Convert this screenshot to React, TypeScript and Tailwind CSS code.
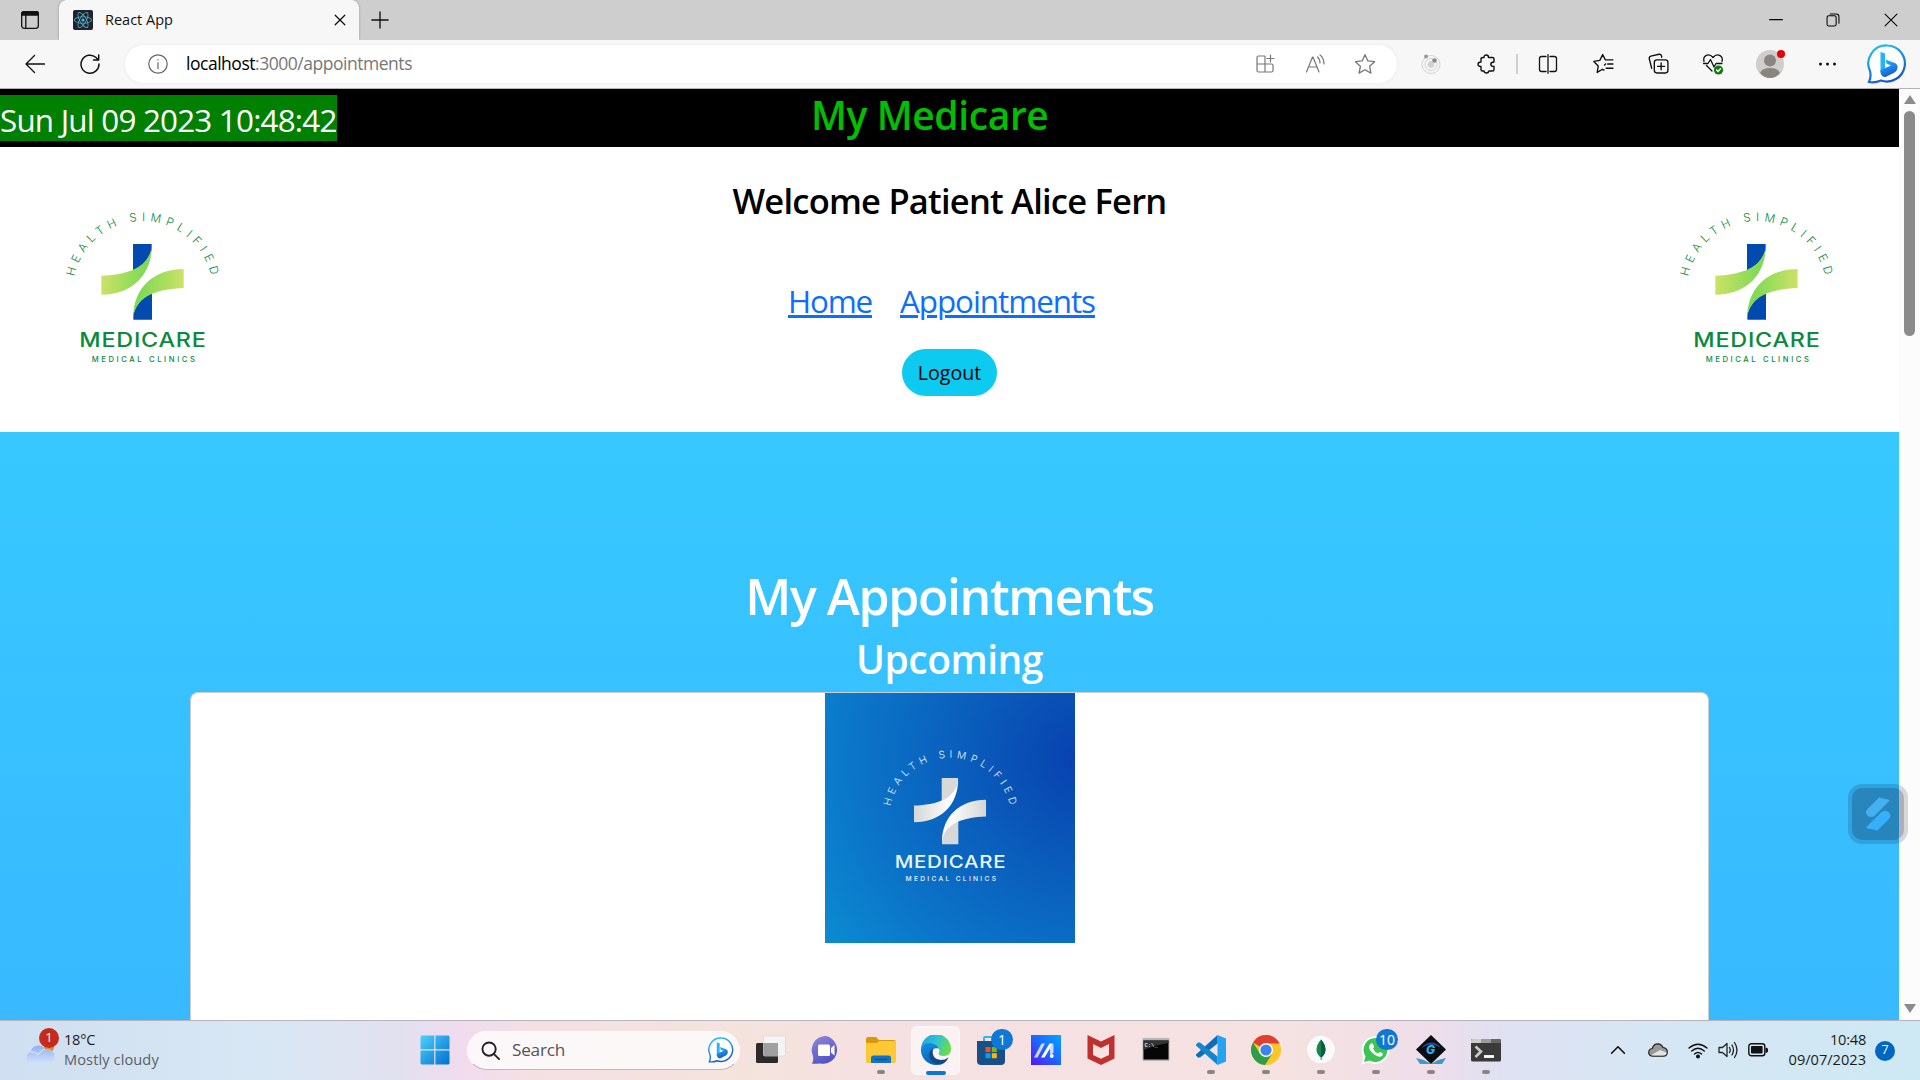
import type { ReactNode } from "react";
import { FaReact } from "react-icons/fa6";

function Line({ children, className, sw = 1.3 }: { children: ReactNode; className: string; sw?: number }) {
  return (
    <svg viewBox="0 0 20 20" className={className} fill="none" stroke="currentColor" strokeWidth={sw} strokeLinecap="round" strokeLinejoin="round">
      {children}
    </svg>
  );
}

function LogoMark({ mono = false, id }: { mono?: boolean; id: string }) {
  const text = mono ? "#eaf5ff" : "#0b8a3e";
  const bar = mono ? "#d8d8d8" : "#034ab0";
  const outer = mono ? "#d6d6d6" : "#cbe266";
  const inner = mono ? "#ffffff" : "#82d955";
  return (
    <>
      <defs>
        <linearGradient id={id + "g"} x1="0" x2="1">
          <stop offset="0" stopColor={outer} />
          <stop offset="0.85" stopColor={inner} />
        </linearGradient>
        <path id={id + "arc"} d="M102.6 259.3A210 210 0 0 1 513.4 259.3" />
      </defs>
      {[0, 180].map((r) => (
        <g key={r} transform={`rotate(${r} 307.5 275.5)`}>
          <path d="M279 162H335V180Q320 225 279 242Z" fill={bar} />
          <path d="M184 257C262 254 325 235 335 170C335 255 275 314 184 314Z" fill={`url(#${id}g)`} />
        </g>
      ))}
      <text fill={text} fontFamily="Inter, sans-serif" fontSize="35" fontWeight="300">
        <textPath href={`#${id}arc`} textLength="568">HEALTH SIMPLIFIED</textPath>
      </text>
      <text x="118" y="472" fill={text} fontFamily="Inter, sans-serif" fontWeight="500" fontSize="59" letterSpacing="2" textLength="382" lengthAdjust="spacingAndGlyphs">MEDICARE</text>
      <text x="155" y="516" fill={text} fontFamily="Inter, sans-serif" fontWeight="500" fontSize="23" textLength="310">MEDICAL CLINICS</text>
    </>
  );
}

function BingBubble({ className, id }: { className: string; id: string }) {
  return (
    <svg viewBox="0 0 40 40" className={className}>
      <defs>
        <linearGradient id={id} x1="0.2" y1="0" x2="0.6" y2="1">
          <stop offset="0" stopColor="#20c3f5" />
          <stop offset="1" stopColor="#1b4fd0" />
        </linearGradient>
      </defs>
      <path d="M20.5 1.5A18 18 0 1 1 14 36.5Q8 39 2 38Q4.500 33 3 27A18 18 0 0 1 20.500 1.500Z" fill="#fff" stroke={`url(#${id})`} strokeWidth="2.200" />
      <path d="M13.500 8L18 9.500V25L13.500 28Z" fill="#26b5f2" />
      <path d="M13.500 26L18 24L24 21.500L19.500 19.500L18.500 15.500L28 19Q31 20.500 30.500 24Q30 27 27.500 28.500L18.500 33Q15 33.500 13.500 29Z" fill={`url(#${id})`} />
    </svg>
  );
}

function TabStrip() {
  return (
    <div className="flex h-10 items-center bg-[#cecece]">
      <div className="flex h-10 w-[59px] items-center pl-5">
        <svg viewBox="0 0 20 20" className="size-5" fill="none" stroke="#111" strokeWidth="1.300">
          <rect x="1.700" y="1.700" width="16.600" height="16.600" rx="2.500" />
          <path d="M1.700 5V3.500Q1.700 1.700 3.700 1.700H16.300Q18.300 1.700 18.300 3.500V5Z" fill="#111" />
          <path d="M5.800 5V18" />
        </svg>
      </div>
      <div className="flex h-10 w-[300px] items-center rounded-t-lg bg-[#f7f7f7] pl-[14px] shadow-[0_0_3px_rgba(0,0,0,0.25)]">
        <div className="flex size-5 items-center justify-center rounded-[2px] bg-[#20232a]">
          <FaReact className="size-[18px] text-[#53b5d2]" />
        </div>
        <span className="ml-3 w-[229px] text-[14.5px] whitespace-nowrap text-[#111]">React App</span>
        <Line className="-ml-[2px] size-4 text-[#111]" sw={1.600}><path d="M4 4L16 16M16 4L4 16" /></Line>
      </div>
      <Line className="ml-3 size-[18px] text-[#111]" sw={1.500}><path d="M10 1V19M1 10H19" /></Line>
      <div className="flex-1" />
      <Line className="mr-[43px] size-[14px] text-black" sw={1.600}><path d="M1 9.500H19" /></Line>
      <Line className="mr-[44px] size-[14px] text-black" sw={1.500}><rect x="1.500" y="4" width="13" height="14.500" rx="2.500" /><path d="M6 1.500H14.500Q18.500 1.500 18.500 5.500V14.500" /></Line>
      <Line className="mr-[22px] size-[14px] text-black" sw={1.500}><path d="M1.500 1.500L18.500 18.500M18.500 1.500L1.500 18.500" /></Line>
    </div>
  );
}

function Toolbar() {
  return (
    <div className="flex h-[49px] items-center border-b border-[#b3b3b3] bg-[#f7f7f7] pb-px">
      <Line className="ml-[25px] size-5 text-[#111]"><path d="M19.500 10H1M9.500 1.500L1 10L9.500 18.500" /></Line>
      <Line className="ml-[35px] size-5 text-[#111]" sw={1.500}><path d="M19 10A9 9 0 1 1 16 3.500L18.500 6M18.700 1V6H13.500" /></Line>
      <div className="ml-[25px] flex h-[38px] w-[1272px] items-center rounded-full bg-white shadow-[0_0_4px_rgba(0,0,0,0.06)]">
        <Line className="ml-[23px] size-5 text-[#666]" sw={1.200}><circle cx="10" cy="10" r="9.200" /><path d="M10 8.700V14.500M10 5.700V6" /></Line>
        <span className="ml-[18px] w-[1068px] text-[17.5px] tracking-[-0.472px] whitespace-nowrap text-[#777]"><span className="text-black">localhost</span>:3000/appointments</span>
        <Line className="ml-px size-5 text-[#777]" sw={1.200}><path d="M10 10V2H3.500Q2 2 2 3.500V16.500Q2 18 3.500 18H16.500Q18 18 18 16.500V11.500Q18 10 16.500 10H2M10 10V18M15.500 1V8M12 4.500H19" /></Line>
        <Line className="ml-[30px] size-5 text-[#777]" sw={1.200}><path d="M1.500 18L7.500 3H8L14 18M3.500 13H12M12.500 3Q15 5 15 9M15 1Q19 4 19 10" /></Line>
        <Line className="ml-[29px] size-[22px] text-[#777]" sw={1.200}><path d="M10 1.500L12.600 7.200L18.700 7.900L14.200 12.100L15.400 18.300L10 15.200L4.600 18.300L5.800 12.100L1.300 7.900L7.400 7.200Z" /></Line>
      </div>
      <svg viewBox="0 0 20 20" className="ml-6 size-5" fill="none" stroke="#d2d2d2">
        <circle cx="10" cy="10.500" r="9" /><circle cx="10" cy="10.500" r="6" /><circle cx="10" cy="10.500" r="3" fill="#d2d2d2" />
        <circle cx="5" cy="2.500" r="2" fill="#999" stroke="none" /><circle cx="13.500" cy="6.500" r="2.200" fill="#888" stroke="none" />
      </svg>
      <Line className="ml-[35px] size-5 text-[#111]" sw={1.400}><path d="M7 3.500H8Q8 1 10.300 1Q12.500 1 12.500 3.500H16.500Q18 3.500 18 5V8Q14.800 8 14.800 10.300Q14.800 12.500 18 12.500V15.500Q18 17 16.500 17H13Q12.500 19 10.500 19Q8.300 19 8 17H6.500Q5 17 5 15.500V12.500Q2 12.500 2 10.200Q2 8 5 8V5Q5 3.500 7 3.500Z" /></Line>
      <div className="ml-5 h-5 w-0.5 bg-[#cfcfcf]" />
      <Line className="ml-5 size-5 text-[#111]" sw={1.300}><path d="M8 2.500H3.500Q1.500 2.500 1.500 4.500V15.500Q1.500 17.500 3.500 17.500H8M12 2.500H16.500Q18.500 2.500 18.500 4.500V15.500Q18.500 17.500 16.500 17.500H12M10 .7V19.300" /></Line>
      <Line className="ml-[35px] size-[21px] text-[#111]"><path d="M12.500 6.500H19M14 10.500H19M12.500 14.500H19M9 15.500L4 18.500L5 12.300L.8 8L6.500 7L9.200 1.500L11.800 6.500M9 15.500L10.500 16.300M11 11.500L12 10.500" /></Line>
      <Line className="ml-[34px] size-[21px] text-[#111]"><rect x="6" y="6.500" width="13" height="12.500" rx="2.500" /><path d="M12.500 9.500V16M9.200 12.700H15.800M3.500 14.500L1.200 5.500Q.9 3.500 2.700 3L10.500 1.200Q12.500 1 13 3V4" /></Line>
      <svg viewBox="0 0 22 22" className="ml-[33px] size-[22px]" fill="none" stroke="#111" strokeWidth="1.300" strokeLinecap="round" strokeLinejoin="round">
        <path d="M2 8.500Q.8 4 4.300 2.300Q8 .8 11 4.500Q14 .8 17.700 2.300Q21.200 4 20 8.500M4.500 12.500L10 18M1.500 10.500H6L8.500 6.500L12 14L14 10.500H20" />
        <circle cx="16.500" cy="17" r="4.600" fill="#107c10" stroke="none" /><path d="M14.500 17L16 18.500L18.500 15.800" stroke="#fff" />
      </svg>
      <div className="relative ml-[32px] size-7">
        <svg viewBox="0 0 28 28" className="size-7"><circle cx="14" cy="14" r="14" fill="#d0cecc" /><circle cx="14" cy="10.500" r="6" fill="#8a8581" /><path d="M4 23Q6 18 14 18Q22 18 24 23Q20 28 14 28Q8 28 4 23Z" fill="#8a8581" /></svg>
        <span className="absolute top-0 -right-px size-2 rounded-full bg-[#e60000]" />
      </div>
      <svg viewBox="0 0 20 20" className="ml-[34px] size-5" fill="#111"><circle cx="2.500" cy="10" r="1.500" /><circle cx="9.500" cy="10" r="1.500" /><circle cx="16.500" cy="10" r="1.500" /></svg>
      <BingBubble id="bingTop" className="ml-[29px] size-10" />
    </div>
  );
}

function SiteHeader() {
  return (
    <header>
      <div className="flex h-[58px] items-start bg-black">
        <span className="mt-1.5 h-[46px] w-[337px] bg-[#008000] text-[31.4px] leading-[49px] tracking-[-0.8px] whitespace-nowrap text-white">Sun Jul 09 2023 10:48:42</span>
        <h1 className="ml-[474px] text-[39px] leading-[52px] font-semibold tracking-[-0.4px] whitespace-nowrap text-[#00bf00]">My Medicare</h1>
      </div>
      <div className="flex h-[285px] bg-white">
        <svg viewBox="0 0 600 570" className="mt-[43px] ml-10 h-[190px] w-[200px]"><LogoMark id="left" /></svg>
        <div className="flex flex-1 flex-col items-center pt-8 pl-[5px]">
          <h2 className="text-[34.5px] leading-[44px] font-semibold tracking-[-0.77px] whitespace-nowrap text-black">Welcome Patient Alice Fern</h2>
          <nav className="mt-14 mr-4 flex gap-7 text-[31.4px] leading-[44px] text-[#0d6efd]">
            <a className="tracking-[-1.18px] whitespace-nowrap underline decoration-[3px] underline-offset-2">Home</a>
            <a className="tracking-[-1.05px] whitespace-nowrap underline decoration-[3px] underline-offset-2">Appointments</a>
          </nav>
          <button className="mt-[26px] flex h-[47px] w-[95px] items-center justify-center rounded-full bg-[#0dcaf0] text-[19.6px] text-black">Logout</button>
        </div>
        <svg viewBox="0 0 600 570" className="mt-[43px] mr-[45px] h-[190px] w-[200px]"><LogoMark id="right" /></svg>
      </div>
    </header>
  );
}

function Appointments() {
  return (
    <main className="flex flex-1 flex-col items-center overflow-hidden bg-linear-to-b from-[#36c8ff] to-[#39b9ff] pt-[134px] text-white">
      <h1 className="text-[50px] leading-[60px] font-semibold tracking-[-1.4px] whitespace-nowrap">My Appointments</h1>
      <h2 className="mt-1.5 text-[39px] leading-[54px] font-semibold tracking-[-0.5px] whitespace-nowrap">Upcoming</h2>
      <div className="mt-1.5 flex w-[1519px] flex-1 justify-center rounded-t-lg border border-b-0 border-[#c9cdd0] bg-white">
        <div className="size-[250px] bg-[radial-gradient(circle_at_102%_26%,#0841ae_0%,#0a5ebc_38%,#0b74c8_70%,#0c96d5_115%)]">
          <svg viewBox="0 0 750 750" className="size-[250px]">
            <g transform="translate(106 113) scale(0.875)"><LogoMark mono id="card" /></g>
          </svg>
        </div>
      </div>
    </main>
  );
}

function ScrollBar() {
  return (
    <div className="flex w-[21px] flex-col items-center bg-[#fcfcfc] py-1.5">
      <svg viewBox="0 0 12 9" className="h-[9px] w-3"><path d="M6 0L12 9H0Z" fill="#8b8b8b" /></svg>
      <div className="mt-[7px] h-[225px] w-[11px] rounded-full bg-[#8b8b8b]" />
      <div className="flex-1" />
      <svg viewBox="0 0 12 9" className="mb-px h-[9px] w-3"><path d="M6 9L12 0H0Z" fill="#8b8b8b" /></svg>
    </div>
  );
}

function TaskItem({ children, running, active, badge }: { children: ReactNode; running?: boolean; active?: boolean; badge?: string }) {
  return (
    <div className="relative flex h-[59px] w-[55px] items-center justify-center pb-px">
      {active && <div className="absolute inset-x-[3px] inset-y-[5px] rounded-md border border-white/50 bg-white/60" />}
      <svg viewBox="0 0 30 30" className="relative size-[30px]">{children}</svg>
      {running && <div className="absolute bottom-1.5 left-6 h-1 w-2 rounded-full bg-[#8d8485]" />}
      {active && <div className="absolute bottom-[5px] left-[18px] h-1 w-5 rounded-full bg-[#0a78d4]" />}
      {badge && <div className="absolute top-2 right-[5px] flex h-[21px] w-[22px] items-center justify-center rounded-full bg-[#0f78d4] text-[14px] text-white">{badge}</div>}
    </div>
  );
}

function Taskbar() {
  return (
    <footer className="flex h-[60px] items-center border-t border-[#b5b3bb] bg-[linear-gradient(90deg,#d0dff1_0px,#d8e7f4_260px,#e2e1f0_400px,#f0dcee_460px,#f4e0e4_530px,#f4e3dd_745px,#f5e1e1_850px,#f5e2e1_1280px,#efdeea_1430px,#dfe1f2_1500px,#d7e6f4_1640px,#cde9f3_1920px)]">
      <div className="relative ml-[25px] h-[59px] w-[39px]">
        <svg viewBox="0 0 30 20" className="mt-[23px] h-5 w-[30px]">
          <defs><linearGradient id="cl" x1="0" y1="0" x2="0" y2="1"><stop offset="0" stopColor="#8fb2ee" /><stop offset="1" stopColor="#d3e1fa" /></linearGradient></defs>
          <circle cx="24" cy="3" r="5" fill="#f5821f" />
          <path d="M6 19.500A6 6 0 0 1 5.500 8A8 8 0 0 1 20 5A7.300 7.300 0 0 1 24 19.500Z" fill="url(#cl)" />
          <path d="M5.500 8Q10 7 13 11Q16 5.500 20 5" stroke="#e3edfd" fill="none" />
        </svg>
        <span className="absolute top-[7px] left-3.5 flex size-5 items-center justify-center rounded-full bg-[#c42b1c] text-[13px] text-white">1</span>
      </div>
      <div className="mb-[3px] flex w-[356px] flex-col text-[14.6px] leading-5 whitespace-nowrap">
        <span className="tracking-[-0.25px] text-[#1b1b1b]">18°C</span>
        <span className="tracking-[0.1px] text-[#5a5f66]">Mostly cloudy</span>
      </div>
      <svg viewBox="0 0 30 30" className="mb-px size-[30px]">
        <defs><linearGradient id="win" x1="0" y1="0" x2="1" y2="1"><stop offset="0" stopColor="#4fd0fb" /><stop offset="1" stopColor="#0070d2" /></linearGradient></defs>
        <path d="M1.500 .5H14.200V14.200H.5V1.500ZM15.400 .5H28.500L29.500 1.500V14.200H15.400ZM.5 15.400H14.200V29.500H1.500L.5 28.500ZM15.400 15.400H29.500V28.500L28.500 29.500H15.400Z" fill="url(#win)" />
      </svg>
      <div className="mb-px ml-[17px] flex h-[39px] w-[273px] items-center rounded-full border border-white/60 border-b-[#c3b7bb] bg-white/75 pl-[13px]">
        <Line className="size-[19px] text-[#222]" sw={2}><circle cx="8.500" cy="8.500" r="7" /><path d="M13.500 13.500L19 19" /></Line>
        <span className="ml-3 w-[196px] text-[17.2px] tracking-[-0.24px] text-[#555]">Search</span>
        <BingBubble id="bingTask" className="size-[26px]" />
      </div>
      <div className="ml-[3px] flex">
        <TaskItem><rect x="0" y="8" width="22" height="20" rx="1.500" fill="#2b2b2b" /><rect x="7.500" y="1" width="22" height="20" rx="1.500" fill="#f4f4f4" stroke="#d8d8d8" strokeWidth=".7" /><path d="M7.500 8H22V21H7.500Z" fill="#a0a0a0" /></TaskItem>
        <TaskItem>
          <defs><linearGradient id="chat" x1="0" y1="0" x2=".5" y2="1"><stop offset="0" stopColor="#9089d8" /><stop offset="1" stopColor="#5452c6" /></linearGradient></defs>
          <path d="M15 1A14 14 0 1 1 9 28.500Q4 29 1 28.800Q2.800 25 2 21A14 14 0 0 1 15 1Z" fill="url(#chat)" /><rect x="7" y="9.500" width="12" height="11.500" rx="1.500" fill="#fff" /><path d="M20 13L23.500 10V20.500L20 17.500Z" fill="#fff" />
        </TaskItem>
        <TaskItem running><path d="M0 4Q0 2 2 2H10L13 5H28Q30 5 30 7V12H0Z" fill="#d9970c" /><path d="M0 8H11L13 6H30V26.500Q30 28 28 28H2Q0 28 0 26.500Z" fill="#fcc935" /><path d="M5 28V23Q5 20.500 7.500 20.500H22.500Q25 20.500 25 23V28Z" fill="#1173c4" /><path d="M9 24.500H21" stroke="#0a4f91" strokeWidth="1.300" /></TaskItem>
        <TaskItem active>
          <defs>
            <linearGradient id="e1" x1="0" y1="0" x2="1" y2=".3"><stop offset="0" stopColor="#1e9fe0" /><stop offset=".55" stopColor="#2dc3d8" /><stop offset="1" stopColor="#63dd55" /></linearGradient>
            <linearGradient id="e2" x1="0" y1="0" x2=".3" y2="1"><stop offset="0" stopColor="#1691e2" /><stop offset="1" stopColor="#0b63bd" /></linearGradient>
          </defs>
          <path d="M0 14A15 15 0 0 1 30 14Q30 21 22.500 21Q18 21 17.500 18.500Q20 15 16 11Q9 5 0 14Z" fill="url(#e1)" />
          <path d="M0 14Q2 7.500 9 8Q16 8.500 18 13.500Q11 12 11 18Q11.500 27 21 29Q18 30 15 30A15 15 0 0 1 0 14Z" fill="url(#e2)" />
          <path d="M12 13.500Q10 24 20 25Q24 25 27.500 22.500Q25 28 20 29.500Q9 29.500 8 20Q8.500 15 12 13.500Z" fill="#114a8b" />
        </TaskItem>
        <TaskItem badge="1"><path d="M8 8V3Q8 2 9 2H21V7" stroke="#35b5e8" strokeWidth="2" fill="none" /><path d="M1 6H29V26Q29 30 25 30H5Q1 30 1 26Z" fill="#174f86" /><path d="M9.500 12H14.500V17H9.500Z" fill="#f25022" /><path d="M15.800 12H20.800V17H15.800Z" fill="#7fba00" /><path d="M9.500 18.200H14.500V23.200H9.500Z" fill="#00a4ef" /><path d="M15.800 18.200H20.800V23.200H15.800Z" fill="#ffb900" /></TaskItem>
        <TaskItem>
          <defs><linearGradient id="asus" x1="1" y1="0" x2="0" y2="1"><stop offset="0" stopColor="#04a6ff" /><stop offset=".5" stopColor="#1d66ff" /><stop offset="1" stopColor="#5a13f5" /></linearGradient></defs>
          <path d="M0 0H30V30H0Z" fill="url(#asus)" /><path d="M3 22.500L10.500 8.500H14L6.500 22.500Z" fill="#c9d9ff" /><path d="M10 22.500L18.500 8.500H22L13.500 22.500Z" fill="#fff" /><path d="M19 12L22.500 8.500V18L19 19.500Z" fill="#c9d9ff" /><circle cx="20.800" cy="21" r="1.900" fill="#fff" />
        </TaskItem>
        <TaskItem><path d="M1.500 0L15 6.500L28.500 0V23.500L15 30L1.500 23.500Z" fill="#c0302f" /><path d="M7 9L15 13L23 9V20L15 23.800L7 20Z" fill="#f5e2e1" /></TaskItem>
        <TaskItem><rect x="1.500" y="3" width="27" height="23" rx="1" fill="#b5b5b5" /><rect x="2.500" y="5.500" width="25" height="19" fill="#060606" /><path d="M2.500 5.500H27.500V8Q14 10 2.500 15Z" fill="#333" /><text x="3.500" y="12" fontSize="5.500" fontFamily="Liberation Mono, monospace" fontWeight="700" fill="#ddd">C:\_</text></TaskItem>
        <TaskItem running><path d="M21.500 0L30 3.500V26.500L21.500 30Z" fill="#25a3f0" /><path d="M21.500 0V8.500L4 22.500L2 22.500L0 20.500V19.500Z" fill="#0b6fb8" /><path d="M21.500 30V21.500L4 7.500L2 7.500L0 9.500V10.500Z" fill="#1486d0" /></TaskItem>
        <TaskItem running><circle cx="15" cy="15" r="15" fill="#fcc626" /><path d="M15 15L2 7.500A15 15 0 0 1 28 7.500L28.500 8.500H15Z" fill="#e0402f" /><path d="M2 7.500A15 15 0 0 0 14 30L21 19L9 18.500Z" fill="#2f9e48" /><circle cx="15" cy="15" r="7" fill="#fff" /><circle cx="15" cy="15" r="5.600" fill="#3e82ee" /></TaskItem>
        <TaskItem running><circle cx="15" cy="14.500" r="13.800" fill="#fafafa" /><path d="M15 4.500Q10.500 9.500 10.500 15Q11 20 14.700 22.500V25H15.300V22.500Q19 20 19.500 15Q19.500 9.500 15 4.500Z" fill="#10884f" /><path d="M15 4.500V25H15.300V22.500Q19 20 19.500 15Q19.500 9.500 15 4.500Z" fill="#0a5c38" /></TaskItem>
        <TaskItem running badge="10"><path d="M14.500 1A14 14 0 1 1 8 27.500L.5 29.500L2.500 22A14 14 0 0 1 14.500 1Z" fill="#fff" /><path d="M14.500 3A12 12 0 1 1 8.500 25.500L3 27L4.500 21.500A12 12 0 0 1 14.500 3Z" fill="#3cc552" /><path d="M9.500 9Q11 7.500 12 9L13 11.500Q13 12.500 12 13.500Q13.500 17 17 18.500L18.500 17Q19 16.500 21.500 18.300Q22.500 19 21 21Q18.500 23 14 20Q8 15.500 8 12Q8 10.300 9.500 9Z" fill="#fff" /></TaskItem>
        <TaskItem running><path d="M0 23L8 25L15 29L22 25L30 23L26 29H4Z" fill="#3b9ccc" /><path d="M15 0L30 14.500L15 29L0 14.500Z" fill="#0a0d12" /><path d="M5 14Q9 7 16 7.500Q22 8 24.500 13Q20 9.500 15 10Q9 10 5 14Z" fill="#1c4c94" /><text x="10" y="19" fontSize="12" fontWeight="800" fontStyle="italic" fontFamily="Inter, sans-serif" fill="#23b6ee">G</text></TaskItem>
        <TaskItem running><rect x="0" y="4" width="30" height="22.500" rx="1.500" fill="#3a3a3a" /><path d="M0 8V5.500Q0 4 1.500 4H10V8Z" fill="#ccc" /><path d="M10 4H20V8H10Z" fill="#9c9c9c" /><path d="M20 4H28.500Q30 4 30 5.500V8H20Z" fill="#666" /><path d="M4.500 11.500L10 16.500L4.500 22" stroke="#ccc" strokeWidth="2.600" fill="none" /><path d="M13 21.500H23" stroke="#fff" strokeWidth="2.800" /></TaskItem>
      </div>
      <div className="flex-1" />
      <Line className="mr-[22px] mb-px size-4 text-[#111]" sw={2}><path d="M2 14L10 6L18 14" /></Line>
      <svg viewBox="0 0 20 14" className="mr-5 mb-px h-3.5 w-5"><path d="M5 13.200Q.7 13 .7 9.300Q.9 6 4.300 5.500Q5.500 .7 10 .8Q13.500 1 15 4.500Q19.300 5 19.300 9Q19.200 13 15.500 13.200Z" fill="#999" stroke="#222" strokeWidth="1.200" /><path d="M3 12.300L12 7L18.500 9.500Q18.500 12.500 15.500 12.600H5Z" fill="#e4e4e4" /></svg>
      <Line className="mr-2.5 size-5 text-[#111]" sw={1.400}><path d="M1 7Q10 -.5 19 7M3.700 10Q10 4.500 16.300 10M6.500 13Q10 9.800 13.500 13" /><circle cx="10" cy="15.500" r="1.300" fill="currentColor" /></Line>
      <Line className="mr-2.5 mb-px size-5 text-[#222]" sw={1.300}><path d="M1 7.500H4.500L9 3.500V16.500L4.500 12.500H1ZM11.500 7.500Q13 10 11.500 12.500M14 5Q17 10 14 15M16.500 2.500Q21.500 10 16.500 17.500" /></Line>
      <svg viewBox="0 0 20 14" className="mb-px h-[14px] w-5"><rect x=".8" y=".8" width="16" height="12" rx="2.500" fill="none" stroke="#111" strokeWidth="1.400" /><rect x="3" y="3" width="11.600" height="7.600" rx=".8" fill="#111" /><path d="M18 5V9.500L19.800 8.500V6Z" fill="#111" stroke="#111" /></svg>
      <div className="mb-[3px] flex w-[98px] flex-col items-end text-[14.6px] leading-5 whitespace-nowrap text-[#1b1b1b]">
        <span className="tracking-[-0.24px]">10:48</span>
        <span>09/07/2023</span>
      </div>
      <div className="mr-[25px] ml-[9px] flex size-5 items-center justify-center rounded-full bg-[#0067c0] text-[12.5px] text-white">7</div>
    </footer>
  );
}

export default function App() {
  return (
    <div className='flex h-[1080px] w-[1920px] flex-col overflow-hidden font-["Open_Sans","Noto_Sans",sans-serif]'>
      <TabStrip />
      <Toolbar />
      <div className="relative flex min-h-0 flex-1">
        <div className="flex w-[1899px] flex-col">
          <SiteHeader />
          <Appointments />
        </div>
        <ScrollBar />
        <div className="absolute top-[695px] right-3 flex size-[60px] items-center justify-center rounded-[14px] bg-[#00001e]/15">
          <div className="flex size-[52px] items-center justify-center rounded-[10px] bg-[#00001e]/18">
            <svg viewBox="0 0 26 34" className="h-[34px] w-[26px]"><path d="M14 .5L25 3L10 18.500Q6 21.500 2.500 18.500Q-.5 15 2.500 12Z" fill="#45b0f0" /><path d="M.5 31L16 15.500Q20 12 24 15.500Q27 19 23.500 22.500L12.500 33.500Z" fill="#36b0fa" /></svg>
          </div>
        </div>
      </div>
      <Taskbar />
    </div>
  );
}
